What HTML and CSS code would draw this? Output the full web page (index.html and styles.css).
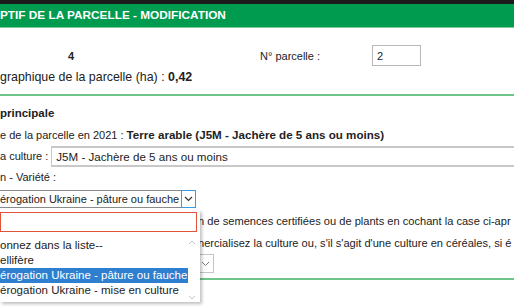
FILE: index.html
```html
<!DOCTYPE html>
<html lang="fr">
<head>
  <meta charset="UTF-8" />
  <title>Descriptif de la parcelle - modification</title>
  <link rel="stylesheet" href="styles.css">
</head>
<body>
  <div class="topbar"></div>
  <div class="header">PTIF DE LA PARCELLE - MODIFICATION</div>

  <!-- identification de la parcelle -->
  <div class="ident">
    <div class="ident-row">
      <span class="ilot">4</span>
      <span class="num-label">N° parcelle :</span>
      <input class="num-input" type="text" value="2">
    </div>
    <div class="line surface">graphique de la parcelle (ha) : <b>0,42</b></div>
  </div>

  <!-- culture principale -->
  <div class="culture">
    <div class="section-title">principale</div>
    <div class="line">e de la parcelle en 2021 : <b class="big">Terre arable (J5M - Jachère de 5 ans ou moins)</b></div>
    <div class="line culture-row">
      <span>a culture :</span>
      <div class="select wide">J5M - Jachère de 5 ans ou moins</div>
    </div>
    <div class="line">n - Variété :</div>
    <div class="variete">
      <div class="select variete-select">
        <span>érogation Ukraine - pâture ou fauche</span>
        <span class="arrow">
          <svg width="9" height="6" viewBox="0 0 9 6"><path d="M1 1l3.5 3.5L8 1" fill="none" stroke="#333" stroke-width="1.2"/></svg>
        </span>
      </div>

      <!-- liste déroulante ouverte -->
      <div class="popup">
        <div class="popup-search"></div>
        <ul class="options">
          <li>onnez dans la liste--</li>
          <li>ellifère</li>
          <li class="selected">érogation Ukraine - pâture ou fauche</li>
          <li>érogation Ukraine - mise en culture</li>
        </ul>
        <div class="scroll">
          <svg width="8" height="5" viewBox="0 0 8 5"><path d="M1 4l3-3 3 3" fill="none" stroke="#c8c8c8" stroke-width="1"/></svg>
          <svg width="8" height="5" viewBox="0 0 8 5"><path d="M1 1l3 3 3-3" fill="none" stroke="#c8c8c8" stroke-width="1"/></svg>
        </div>
      </div>

      <div class="certif">
        <div class="line">n de semences certifiées ou de plants en cochant la case ci-apr</div>
        <div class="line">nercialisez la culture ou, s'il s'agit d'une culture en céréales, si é</div>
        <div class="small-select">
          <svg width="9" height="6" viewBox="0 0 9 6"><path d="M1 1l3.5 3.5L8 1" fill="none" stroke="#777" stroke-width="1"/></svg>
        </div>
      </div>
    </div>
  </div>
  <div class="bottom-rule"></div>
</body>
</html>
```

FILE: styles.css
```css
html, body {
  height: 100%;
}

body {
  margin: 0;
  min-height: 307px;
  font-family: "Liberation Sans", Arial, sans-serif;
  font-size: 11px;
  color: #222;
  background: #fff;
  overflow: hidden;
  white-space: nowrap;
}

.topbar {
  height: 4px;
  background-color: #1c1c1c;
}

.header {
  height: 23px;
  line-height: 23px;
  background-color: #009b4e;
  color: #fff;
  font-weight: bold;
  font-size: 11.8px;
  border-bottom: 1px solid #7ccf98;
}

.ident {
  padding-top: 17px;
  border-bottom: 2px solid #6cc58a;
  padding-bottom: 6px;
}

.ident-row {
  display: flex;
  align-items: center;
  height: 21px;
}

.ilot {
  font-weight: bold;
  margin-left: 68px;
  width: 192px;
}

.num-label {
  width: 112px;
}

.num-input {
  width: 49px;
  height: 21px;
  box-sizing: border-box;
  border: 1px solid #b8b8b8;
  padding: 0 4px;
  font-family: inherit;
  font-size: 11px;
  color: #222;
}

.line {
  height: 21px;
  line-height: 21px;
}

.surface {
  margin-top: 1px;
  font-size: 12.4px;
}

.big {
  font-size: 11.6px;
}

.culture {
  padding-top: 6px;
}

.section-title {
  font-weight: bold;
  font-size: 11.5px;
  height: 22px;
  line-height: 22px;
}

.culture-row {
  display: flex;
  align-items: center;
  gap: 3px;
  height: 22px;
}

.select {
  box-sizing: border-box;
  border: 1px solid #bdbdbd;
  background: #fff;
}

.select.wide {
  flex: 1;
  height: 21px;
  line-height: 17px;
  padding-left: 4px;
  font-size: 11.6px;
  border-right: none;
  border-top-width: 2px;
  border-bottom-width: 2px;
  border-color: #c8c8c8;
}

.variete {
  position: relative;
  margin-top: 2px;
}

.variete-select {
  display: flex;
  justify-content: space-between;
  width: 196px;
  height: 18px;
  line-height: 16px;
  border-left: none;
  border-color: #8a8a8a;
}

.arrow {
  width: 13px;
  display: flex;
  align-items: center;
  justify-content: center;
  outline: 1px solid #3c9ae0;
}

.popup {
  position: absolute;
  left: 0;
  top: 20px;
  width: 200px;
  height: 92px;
  background: #fff;
  box-shadow: 2px 2px 3px rgba(0, 0, 0, 0.25);
  z-index: 2;
}

.popup-search {
  width: 197px;
  height: 20px;
  box-sizing: border-box;
  border: 1px solid #e2533b;
  margin-top: 2px;
}

.options {
  list-style: none;
  margin: 6px 0 0;
  padding: 0;
  width: 188px;
  font-size: 11.5px;
}

.options li {
  height: 15px;
  line-height: 15px;
}

.options li.selected {
  background-color: #2f7fd0;
  color: #fff;
}

.scroll {
  position: absolute;
  right: 4px;
  top: 30px;
  height: 60px;
  display: flex;
  flex-direction: column;
  justify-content: space-between;
}

.certif {
  margin-left: 198px;
  padding-top: 2px;
  font-size: 11.1px;
}

.certif .line {
  height: 22px;
  line-height: 22px;
}

.small-select {
  width: 16px;
  height: 19px;
  box-sizing: border-box;
  border: 1px solid #c4c4c4;
  border-left: none;
  display: flex;
  align-items: center;
  justify-content: center;
}

.bottom-rule {
  margin-left: 200px;
  margin-top: 5px;
  border-top: 2px solid #6cc58a;
}
```
